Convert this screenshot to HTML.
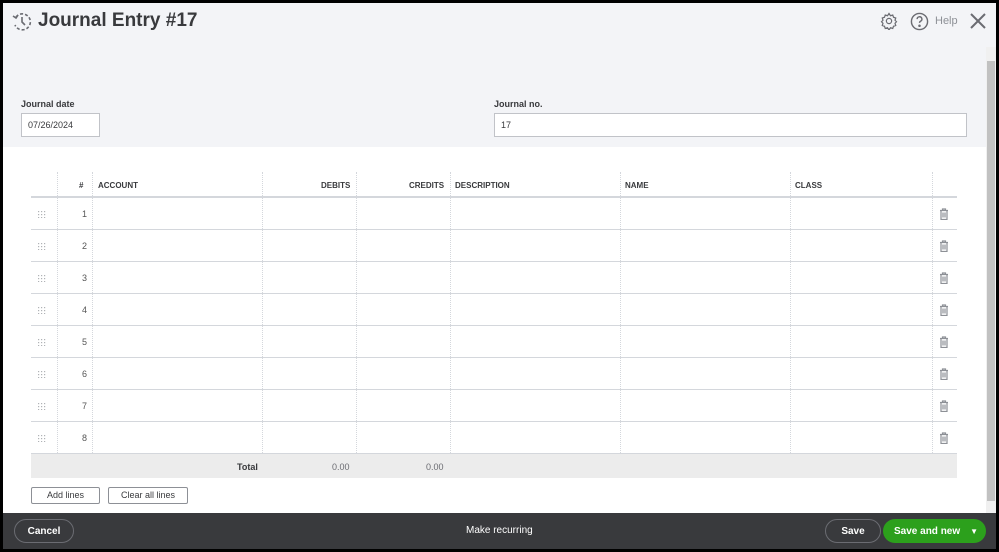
<!DOCTYPE html>
<html><head><style>
*{box-sizing:border-box;margin:0;padding:0}
body{width:999px;height:552px;overflow:hidden;background:#000;font-family:"Liberation Sans",sans-serif;position:relative}
.frame{position:absolute;left:3px;top:3px;width:993px;height:546px;background:#fff;overflow:hidden}
.hdr{position:absolute;left:0;top:0;width:993px;height:144px;background:#f3f4f7}
.abs{position:absolute}
.lbl{font-size:9px;color:#393a3d;font-weight:bold}
.inp{border:1px solid #c1c3c8;background:#fff;font-size:9px;color:#393a3d;padding-left:6px;line-height:22px;height:24px}
.tbl{position:absolute;left:28px;top:169px;width:926px}
.row{position:absolute;left:0;width:926px;border-bottom:1px solid #d4d7dc}
.vl{position:absolute;top:0;bottom:0;border-left:1px dotted #d4d7dc}
.th{position:absolute;font-size:8px;font-weight:bold;color:#393a3d;top:9px}
.btn{position:absolute;border:1px solid #8d9096;border-radius:2px;background:#fff;font-size:9px;color:#393a3d;text-align:center;line-height:15px;height:17px}
.foot{position:absolute;left:0;top:510px;width:993px;height:36px;background:#393a3d}
</style></head><body>
<div class="frame">
<div class="hdr"></div>
<svg class="abs" style="left:8px;top:8px" width="22" height="22" viewBox="0 0 22 22" fill="none" stroke="#6b6c72" stroke-width="1.6"><path d="M5 6 A8 8 0 1 1 4 14" stroke-dasharray="3 2"/><path d="M11 6v5l3 3"/><path d="M2 5l3 2 2-3"/></svg>
<div class="abs" style="left:35px;top:7px;font-size:19px;font-weight:bold;color:#393a3d">Journal Entry #17</div>
<svg class="abs" style="left:877px;top:9px" width="18" height="18" viewBox="0 0 24 24" fill="none" stroke="#6b6c72" stroke-width="1.6"><circle cx="12" cy="12" r="3.5"/><path d="M12 2l2 3 3-1 1 3 3 1-1 3 2 2-2 2 1 3-3 1-1 3-3-1-2 3-2-3-3 1-1-3-3-1 1-3-2-2 2-2-1-3 3-1 1-3 3 1z"/></svg>
<svg class="abs" style="left:907px;top:9px" width="19" height="19" viewBox="0 0 20 20" fill="none" stroke="#6b6c72" stroke-width="1.5"><circle cx="10" cy="10" r="8.5"/><path d="M7.5 7.5a2.5 2.5 0 1 1 3.5 2.3c-.8.4-1 .9-1 1.7"/><circle cx="10" cy="14.5" r=".6" fill="#6b6c72"/></svg>
<div class="abs" style="left:932px;top:12px;font-size:11px;color:#8d9096">Help</div>
<svg class="abs" style="left:966px;top:9px" width="18" height="18" viewBox="0 0 18 18" stroke="#6b6c72" stroke-width="2"><path d="M2 2l14 14M16 2L2 16"/></svg>
<div class="abs" style="left:983px;top:44px;width:10px;height:466px;background:#f0f0f0"></div>
<div class="abs" style="left:984px;top:58px;width:8px;height:440px;background:#c1c1c1"></div>
<div class="abs lbl" style="left:18px;top:96px">Journal date</div>
<div class="abs inp" style="left:18px;top:110px;width:79px">07/26/2024</div>
<div class="abs lbl" style="left:491px;top:96px">Journal no.</div>
<div class="abs inp" style="left:491px;top:110px;width:473px">17</div>

<div class="tbl">
<div class="row" style="top:0;height:26px;border-bottom:2px solid #d4d7dc">
<div class="vl" style="left:26px"></div><div class="vl" style="left:61px"></div><div class="vl" style="left:231px"></div><div class="vl" style="left:325px"></div><div class="vl" style="left:419px"></div><div class="vl" style="left:589px"></div><div class="vl" style="left:759px"></div><div class="vl" style="left:901px"></div>
<div class="th" style="left:48px">#</div><div class="th" style="left:67px">ACCOUNT</div><div class="th" style="left:290px">DEBITS</div><div class="th" style="left:378px">CREDITS</div><div class="th" style="left:424px">DESCRIPTION</div><div class="th" style="left:594px">NAME</div><div class="th" style="left:764px">CLASS</div>
</div>
</div>
<div id="rows"></div>
<div class="abs" style="left:28px;top:451px;width:926px;height:24px;background:#ececec"></div>
<div class="abs" style="left:234px;top:459px;font-size:9px;color:#393a3d;font-weight:bold">Total</div>
<div class="abs" style="left:329px;top:459px;font-size:9px;color:#6b6c72">0.00</div>
<div class="abs" style="left:423px;top:459px;font-size:9px;color:#6b6c72">0.00</div>
<div class="btn" style="left:28px;top:484px;width:69px">Add lines</div>
<div class="btn" style="left:105px;top:484px;width:80px">Clear all lines</div>
<div class="foot">
<div class="abs" style="left:11px;top:6px;width:60px;height:24px;border:1px solid #6b6c72;border-radius:12px;color:#fff;font-size:10px;font-weight:bold;text-align:center;line-height:24px">Cancel</div>
<div class="abs" style="left:463px;top:12px;color:#fff;font-size:10px">Make recurring</div>
<div class="abs" style="left:822px;top:6px;width:56px;height:24px;border:1px solid #6b6c72;border-radius:12px;color:#fff;font-size:10px;font-weight:bold;text-align:center;line-height:24px">Save</div>
<div class="abs" style="left:880px;top:6px;width:103px;height:24px;background:#2ca01c;border-radius:12px;color:#fff;font-size:10px;font-weight:bold;line-height:25px;padding-left:11px">Save and new<span style="position:absolute;right:8px;font-size:8px">▼</span></div>
</div>
</div>
<script>
var h='';
for(var i=0;i<8;i++){var t=195+i*32;
h+='<div class="row" style="left:28px;top:'+t+'px;height:32px;position:absolute;width:926px">'+
'<div class="vl" style="left:26px"></div><div class="vl" style="left:61px"></div><div class="vl" style="left:231px"></div><div class="vl" style="left:325px"></div><div class="vl" style="left:419px"></div><div class="vl" style="left:589px"></div><div class="vl" style="left:759px"></div><div class="vl" style="left:901px"></div>'+
'<svg style="position:absolute;left:7px;top:13px" width="9" height="7" viewBox="0 0 9 7" fill="#b0b2b6"><rect x="0" y="0" width="1.2" height="1.2"/><rect x="3" y="0" width="1.2" height="1.2"/><rect x="6" y="0" width="1.2" height="1.2"/><rect x="0" y="3" width="1.2" height="1.2"/><rect x="3" y="3" width="1.2" height="1.2"/><rect x="6" y="3" width="1.2" height="1.2"/><rect x="0" y="6" width="1.2" height="1.2"/><rect x="3" y="6" width="1.2" height="1.2"/><rect x="6" y="6" width="1.2" height="1.2"/></svg>'+
'<div style="position:absolute;left:40px;width:16px;text-align:right;top:11px;font-size:9px;color:#555">'+(i+1)+'</div>'+
'<svg style="position:absolute;left:908px;top:10px" width="10" height="12" viewBox="0 0 10 12" fill="none" stroke="#8d9096" stroke-width="1.2"><path d="M1 2.5h8M3.5 2.5V1h3v1.5M2 2.5v9h6v-9M4 4.5v5M6 4.5v5"/></svg></div>';}
document.getElementById('rows').outerHTML=h;
</script>
</body></html>
